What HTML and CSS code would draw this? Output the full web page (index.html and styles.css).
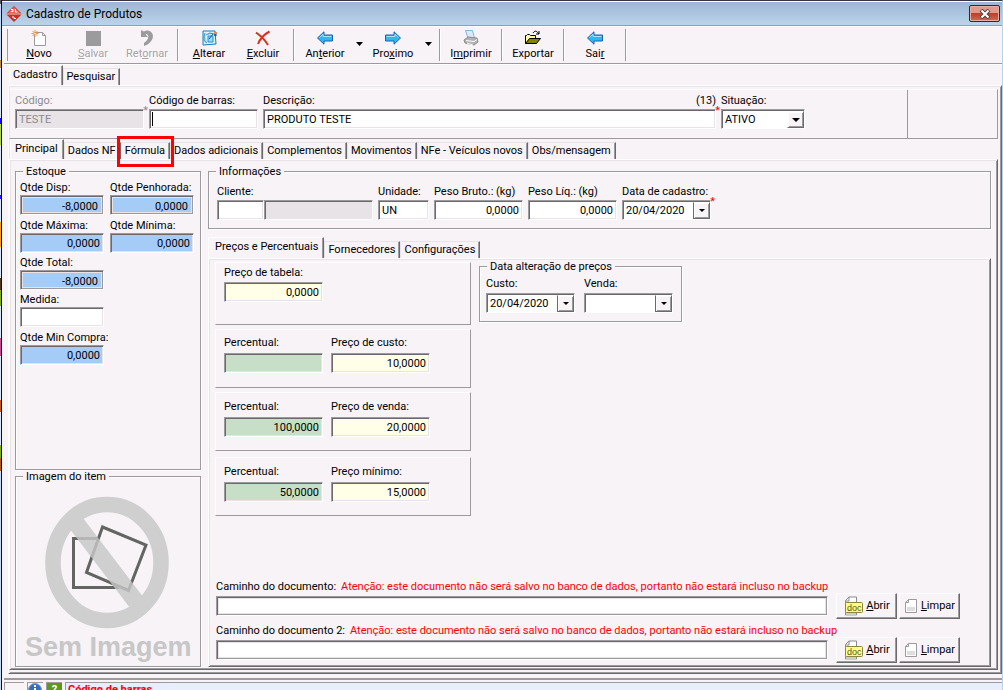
FILE: index.html
```html
<!DOCTYPE html>
<html lang="pt-BR">
<head>
<meta charset="utf-8">
<title>Cadastro de Produtos</title>
<link rel="stylesheet" href="styles.css">
</head>
<body>
<svg class="defs" aria-hidden="true">
  <symbol id="arrow-left" viewBox="0 0 16 14"><path d="M.5 7 7 .8v3.200h8.500v6H7v3.200z" fill="#35b4f0" stroke="#1b62b4"/><path d="M2.500 6.500 6 3.200V5.500h8.500" fill="none" stroke="#a5e4ff"/></symbol>
  <symbol id="doc" viewBox="0 0 20 21"><path d="M2.500 4.500 6 1h7.500v18h-11z" fill="#fff" stroke="#8c8a8c"/><path d="M6 1v4H2.500" fill="none" stroke="#8c8a8c"/><path d="M3 17h10v3H3z" fill="#cecbce"/><rect x="2.500" y="6.500" width="17" height="10" rx="1" fill="#ffff84" stroke="#8c8642"/><text x="4" y="15" class="doc-text">doc</text></symbol>
  <symbol id="page" viewBox="0 0 14 16"><path d="M1.500 4.500 4.500 1.500h8v13h-11z" fill="#fff" stroke="#9c9a9c"/><path d="M3 9h8v4H3z" fill="#e0dde0"/><path d="M4.500 1.500v3h-3" fill="none" stroke="#9c9a9c"/></symbol>
</svg>
<div class="desktop"></div>
<div class="window">
  <header class="titlebar">
    <svg class="logo" viewBox="0 0 16 16"><path d="M8 0 16 8 8 16 0 8z" fill="#c9302c"/><path d="M8 1 14 7H2z" fill="#e2685c"/><path d="M0 8h16" stroke="#f3c7c0"/><path d="M5 3.500h2v2H5M9.500 3v3h2M6 11h2v1.500h2" fill="none" stroke="#fff"/></svg>
    <h1>Cadastro de Produtos</h1>
    <button class="close" aria-label="Fechar"><svg viewBox="0 0 12 10"><path d="m2 1 8 8m0-8L2 9" stroke="#52434a" stroke-width="4"/><path d="m2.500 1.500 7 7m0-7-7 7" stroke="#fff" stroke-width="2"/></svg></button>
  </header>

  <nav class="toolbar">
    <button class="tool"><svg viewBox="0 0 16 16"><path d="M3.500 2.500h8l3 3v10h-11z" fill="#fff" stroke="#9c9a9c"/><path d="M11.500 2.500v3h3" fill="none" stroke="#9c9a9c"/><path d="M4 0v7M.5 3.500h7M1.500 1l5 5m0-5-5 5" stroke="#f0a020"/><path d="M3 3h2v1H3z" fill="#fff3a0"/></svg><span><u>N</u>ovo</span></button>
    <button class="tool" disabled><svg viewBox="0 0 16 16"><path d="M1 1h15v15H1z" fill="#9c9a9c"/></svg><span><u>S</u>alvar</span></button>
    <button class="tool" disabled><svg viewBox="0 0 16 16"><path d="M2 0v7h7L6.500 4.500C10 2.500 11 9 5 13v3c9-3 11-11 7-14-2-2-5-2-7-.5z" fill="#9c9a9c"/></svg><span>Ret<u>o</u>rnar</span></button>
    <i class="sep"></i>
    <button class="tool"><svg viewBox="0 0 16 16"><path d="M2 1h12l1 13-13 1z" fill="#dff3ff" stroke="#1c78b8"/><path d="M4 3C2 8 3 12 6 13M5 5l4-2 4 1M7 6h5v6H7z" fill="#9bdcfa" stroke="#2291d0"/><path d="m8 9 4-5" stroke="#174a80"/><path d="M14 3v3m-1-1h3" stroke="#174a80"/><path d="M13 2h3v2h-3z" fill="#d8904a"/></svg><span><u>A</u>lterar</span></button>
    <button class="tool"><svg viewBox="0 0 16 16"><path d="M1 2.500C6 6 10 10 13 15M14.500 1.500C8 5 5 9 3 14" fill="none" stroke="#d8321c" stroke-width="2"/></svg><span><u>E</u>xcluir</span></button>
    <i class="sep"></i>
    <button class="tool"><svg viewBox="0 0 16 14"><use href="#arrow-left"/></svg><span>An<u>t</u>erior</span></button>
    <button class="caret" aria-label="Opções de anterior"><svg viewBox="0 0 7 4"><path d="M0 0h7L3.500 4z"/></svg></button>
    <button class="tool"><svg class="flip" viewBox="0 0 16 14"><use href="#arrow-left"/></svg><span>Pro<u>x</u>imo</span></button>
    <button class="caret wide" aria-label="Opções de próximo"><svg viewBox="0 0 7 4"><path d="M0 0h7L3.500 4z"/></svg></button>
    <i class="sep"></i>
    <button class="tool"><svg viewBox="0 0 16 16"><path d="M2.500.5h7l2 7.500H5z" fill="#d6ebff" stroke="#84b4e0"/><path d="m1 10 4-3 9 1 1 4-4 3-9-2z" fill="#b5b2b5" stroke="#8c8a8c"/><path d="m3 10.500 8 1 3-2M4 13l6 2" fill="none" stroke="#fff"/></svg><span>I<u>m</u>primir</span></button>
    <i class="sep"></i>
    <button class="tool"><svg viewBox="0 0 16 16"><path d="M.5 13.500v-8h1l1-1h2l1 1h5v4" fill="#ffff9c" stroke="#000"/><path d="m.5 13.500 4-5h11l-4 5z" fill="#848200" stroke="#000"/><path d="M8 3c2-3 4-2 6 1m0-3v3h-3" fill="none" stroke="#000"/></svg><span>Exportar</span></button>
    <i class="sep"></i>
    <button class="tool"><svg viewBox="0 0 16 14"><use href="#arrow-left"/></svg><span>Sai<u>r</u></span></button>
    <i class="sep"></i>
  </nav>

  <nav class="tabs main-tabs">
    <button class="tab active">Cadastro</button>
    <button class="tab">Pesquisar</button>
  </nav>

  <main class="pane outer-pane">
    <section class="header-panel">
      <div class="header-fields">
        <div class="field w129 req muted"><label for="codigo">Código:</label><input id="codigo" value="TESTE" disabled></div>
        <div class="field w109"><label for="barras">Código de barras:</label><div class="caret-box"><input id="barras"></div></div>
        <div class="field grow req"><label for="desc">Descrição:<span>(13)</span></label><input id="desc" value="PRODUTO TESTE"></div>
        <div class="field w84"><label for="sit">Situação:</label><div class="combo"><select id="sit"><option>ATIVO</option></select><span class="drop"></span></div></div>
      </div>
    </section>

    <nav class="tabs">
      <button class="tab active">Principal</button>
      <button class="tab">Dados NF</button>
      <button class="tab marked">Fórmula</button>
      <button class="tab">Dados adicionais</button>
      <button class="tab">Complementos</button>
      <button class="tab">Movimentos</button>
      <button class="tab">NFe - Veículos novos</button>
      <button class="tab">Obs/mensagem</button>
    </nav>

    <div class="pane product-pane">
      <aside class="side">
        <section class="group stock">
          <h2>Estoque</h2>
          <div class="stock-grid">
            <div class="field"><label for="q1">Qtde Disp:</label><input id="q1" class="num blue framed" value="-8,0000"></div>
            <div class="field"><label for="q2">Qtde Penhorada:</label><input id="q2" class="num blue framed" value="0,0000"></div>
            <div class="field"><label for="q3">Qtde Máxima:</label><input id="q3" class="num blue" value="0,0000"></div>
            <div class="field"><label for="q4">Qtde Mínima:</label><input id="q4" class="num blue" value="0,0000"></div>
            <div class="field first"><label for="q5">Qtde Total:</label><input id="q5" class="num blue framed" value="-8,0000"></div>
            <div class="field first"><label for="q6">Medida:</label><input id="q6"></div>
            <div class="field first"><label for="q7">Qtde Min Compra:</label><input id="q7" class="num blue" value="0,0000"></div>
          </div>
        </section>
        <section class="group picture">
          <h2>Imagem do item</h2>
          <svg viewBox="16 484 184 182" role="img" aria-label="Sem Imagem">
            <path d="M73.500 538.500h44v49h-44z" fill="none" stroke="#636563" stroke-width="3"/>
            <path d="m102.500 527 43.500 18-17.500 45.500-42-18z" fill="#f7f3f7" stroke="#636563" stroke-width="3"/>
            <path d="m76 523 61 80" stroke="#c6c7c6" stroke-opacity=".82" stroke-width="17"/>
            <ellipse cx="107" cy="562.500" rx="54" ry="58" fill="none" stroke="#cecfce" stroke-width="15.500"/>
            <text x="25" y="656">Sem Imagem</text>
          </svg>
        </section>
      </aside>

      <div class="details">
        <section class="group info">
          <h2>Informações</h2>
          <div class="row">
            <div class="field w156"><label for="cli">Cliente:</label><div class="client"><input id="cli"><input aria-label="Nome do cliente" disabled></div></div>
            <div class="field w51"><label for="un">Unidade:</label><input id="un" value="UN"></div>
            <div class="field w89"><label for="pb">Peso Bruto.: (kg)</label><input id="pb" class="num" value="0,0000"></div>
            <div class="field w89"><label for="pl">Peso Líq.: (kg)</label><input id="pl" class="num" value="0,0000"></div>
            <div class="field w89 req"><label for="dc">Data de cadastro:</label><div class="combo"><input id="dc" value="20/04/2020"><button class="drop" aria-label="Abrir calendário"></button></div></div>
          </div>
        </section>

        <nav class="tabs price-tabs">
          <button class="tab active">Preços e Percentuais</button>
          <button class="tab">Fornecedores</button>
          <button class="tab">Configurações</button>
        </nav>
        <div class="pane price-pane">
          <div class="price-area">
            <div class="prices">
              <section class="raised first-price"><div class="field w99"><label for="pt">Preço de tabela:</label><input id="pt" class="num yellow" value="0,0000"></div></section>
              <section class="raised cost"><div class="field w99"><label for="p1">Percentual:</label><input id="p1" class="num green"></div><div class="field w99"><label for="v1">Preço de custo:</label><input id="v1" class="num yellow" value="10,0000"></div></section>
              <section class="raised"><div class="field w99"><label for="p2">Percentual:</label><input id="p2" class="num green" value="100,0000"></div><div class="field w99"><label for="v2">Preço de venda:</label><input id="v2" class="num yellow" value="20,0000"></div></section>
              <section class="raised last"><div class="field w99"><label for="p3">Percentual:</label><input id="p3" class="num green" value="50,0000"></div><div class="field w99"><label for="v3">Preço mínimo:</label><input id="v3" class="num yellow" value="15,0000"></div></section>
            </div>
            <section class="group dates">
              <h2>Data alteração de preços</h2>
              <div class="row">
                <div class="field w89"><label for="d1">Custo:</label><div class="combo"><input id="d1" value="20/04/2020"><button class="drop" aria-label="Abrir calendário"></button></div></div>
                <div class="field w89"><label for="d2">Venda:</label><div class="combo"><input id="d2"><button class="drop" aria-label="Abrir calendário"></button></div></div>
              </div>
            </section>
          </div>
          <div class="documents">
            <div class="document">
              <div class="field grow"><label for="doc1">Caminho do documento: <em>Atenção: este documento não será salvo no banco de dados, portanto não estará incluso no backup</em></label><input id="doc1" class="heavy"></div>
              <button class="push"><svg width="20" height="21"><use href="#doc"/></svg><span><u>A</u>brir</span></button>
              <button class="push"><svg width="14" height="16"><use href="#page"/></svg><span><u>L</u>impar</span></button>
            </div>
            <div class="document">
              <div class="field grow"><label for="doc2">Caminho do documento 2: <em>Atenção: este documento não será salvo no banco de dados, portanto não estará incluso no backup</em></label><input id="doc2" class="heavy"></div>
              <button class="push"><svg width="20" height="21"><use href="#doc"/></svg><span><u>A</u>brir</span></button>
              <button class="push"><svg width="14" height="16"><use href="#page"/></svg><span><u>L</u>impar</span></button>
            </div>
          </div>
        </div>
      </div>
    </div>
  </main>

  <footer class="status">
    <span class="cell"></span>
    <span class="cell small"><svg viewBox="0 0 14 14"><circle cx="7" cy="7" r="6.500" fill="#2f6fd0" stroke="#8c9ab0"/><path d="M6 2h2v2H6zM6 5h2v6H6z" fill="#fff"/></svg></span>
    <span class="cell small help">?</span>
    <span class="cell message">Código de barras</span>
  </footer>
</div>
</body>
</html>
```
FILE: styles.css
```css
* { box-sizing: border-box; }

:root {
  --face: #f7f3f7;
  --light: #ffffff;
  --soft: #e7e3e7;
  --shade: #9c9a9c;
  --dark: #6b696b;
}

body {
  margin: 0;
  height: 100vh;
  overflow: hidden;
  display: flex;
  background: var(--face);
  color: #000;
  font: 11px/14px Roboto, "Liberation Sans", sans-serif;
}

button, input, select { font: inherit; color: inherit; margin: 0; border-radius: 0; }
button { padding: 0; border: 0; background: none; white-space: nowrap; }
h1, h2 { margin: 0; font-weight: normal; font-size: inherit; }
.defs { position: absolute; width: 0; height: 0; }

.desktop {
  width: 2px;
  flex: none;
  border-right: 1px solid #101018;
  background: linear-gradient(#555 0 4px, #c6dbf7 4px 60px, #c08a40 60px 68px, #dbe7f7 68px 118px, #1010f0 118px 124px, #b0d850 124px 145px, #dbe7f7 145px 195px, #2020f0 195px 199px, #dbe7f7 199px 222px, #ff9c20 222px 247px, #dbe7f7 247px 278px, #503820 278px 290px, #80b020 290px 306px, #dbe7f7 306px 338px, #c05090 338px 356px, #dbe7f7 356px 400px, #c05a20 400px 412px, #dbe7f7 412px 445px, #80b020 445px 458px, #b05a20 458px 471px, #c6dbf7 471px);
}

.window {
  flex: 1;
  min-width: 0;
  height: calc(100vh + 10px);
  display: flex;
  flex-direction: column;
  padding-left: 2px;
  border-top: 1px solid #39343c;
  border-right: 1px solid #b5d3ef;
}

/* title bar */
.titlebar {
  height: 25px;
  flex: none;
  display: flex;
  align-items: center;
  gap: 4px;
  margin-left: -2px;
  padding: 0 2px 0 4px;
  border-top: 1px solid #fff;
  border-bottom: 1px solid #9c9a9c;
  background: linear-gradient(#9cb6d3, #bdd3eb);
}
.titlebar h1 { flex: 1; font: 12px/16px Roboto, sans-serif; }
.logo { width: 16px; height: 16px; }
.close {
  width: 31px;
  height: 17px;
  display: grid;
  place-items: center;
  border: 1px solid #4a1c24;
  border-radius: 2px;
  box-shadow: inset 0 0 0 1px #e8b0a4;
  background: linear-gradient(#e09a8c 0 45%, #b83c28 45%, #cf6a50);
}
.close svg { width: 12px; height: 10px; }

/* toolbar */
.toolbar {
  height: 38px;
  flex: none;
  display: flex;
  padding-left: 8px;
  border-top: 1px solid #fff;
  border-bottom: 1px solid var(--shade);
  background: linear-gradient(90deg, transparent 3px, var(--shade) 3px 4px, transparent 4px) 0 2px / 100% 32px no-repeat;
  box-shadow: 0 1px #fff;
}
.tool {
  width: 54px;
  display: flex;
  flex-direction: column;
  align-items: center;
  padding-top: 3px;
}
.tool svg { width: 16px; height: 16px; flex: none; }
.tool span { line-height: 16px; }
.tool:disabled { color: #a5a2a5; text-shadow: 1px 1px #fff; }
.flip { transform: scaleX(-1); }
.caret { width: 14px; display: grid; place-items: center; }
.caret.wide { width: 16px; }
.caret svg { width: 7px; height: 4px; margin-bottom: 2px; }
.sep {
  width: 8px;
  margin: 2px 0;
  background: linear-gradient(90deg, transparent 3px, var(--shade) 3px 4px, #fff 4px 5px, transparent 5px);
}

/* tabs and panes */
.tabs { display: flex; align-items: flex-end; flex: none; height: 20px; padding-left: 1px; }
.main-tabs { margin: 1px 0 0 5px; padding-left: 0; }
.tab {
  height: 17px;
  padding: 0 4px 0 3px;
  border-top: 1px solid var(--soft);
  border-left: 1px solid var(--soft);
  border-right: 1px solid var(--dark);
  box-shadow: inset -1px 0 var(--shade);
}
.tab.active {
  height: 21px;
  margin-bottom: -1px;
  padding: 0 5px 3px 4px;
  border-color: #fff var(--dark) transparent #fff;
  background: var(--face);
}
.main-tabs .tab.active { padding: 0 4px 3px 3px; }
.marked { position: relative; }
.marked::after {
  content: "";
  position: absolute;
  inset: -7px -5px -8px -5px;
  border: 3px solid #ff0008;
}
.pane {
  border: 1px solid;
  border-color: #fff var(--dark) var(--dark) #fff;
  box-shadow: inset 1px 1px var(--soft), inset -1px -1px var(--shade);
}
.outer-pane {
  flex: 1;
  min-height: 0;
  display: flex;
  flex-direction: column;
  margin-left: 4px;
  padding: 3px 3px 3px 0;
}

/* sunken boxes */
input, select {
  width: 100%;
  min-width: 0;
  height: 20px;
  padding: 0 4px 0 3px;
  outline: 0;
  border: 1px solid;
  border-color: var(--shade) #fff #fff var(--shade);
  box-shadow: inset 1px 1px var(--dark), inset -1px -1px var(--soft);
  background: #fff;
}
input:disabled { background: #e7e3e7; color: #8c8a8c; }
.num { text-align: right; padding-right: 3px; }
.blue { background: #a5cbf7; }
.green { background: #c6dfc6; }
.yellow { background: #ffffe7; }
.framed {
  padding: 2px 5px 0;
  box-shadow: inset 1px 1px var(--dark), inset -1px -1px var(--shade), inset 0 0 0 2px var(--soft);
}
.heavy { box-shadow: inset 1px 1px var(--dark), inset -1px -1px var(--shade), inset 0 0 0 2px var(--soft); }

.field { position: relative; display: flex; flex-direction: column; gap: 2px; flex: none; }
.field label { display: flex; justify-content: space-between; white-space: nowrap; }
.field.grow { flex: 1; min-width: 0; }
.muted label { color: #8c8a8c; }
.req::after { content: "*"; position: absolute; right: -4px; top: 10px; color: #f00; }
.muted.req::after { color: #8c8a8c; }
.w51 { width: 51px; }
.w84 { width: 84px; }
.w89 { width: 89px; }
.w99 { width: 99px; }
.w109 { width: 109px; }
.w129 { width: 129px; }
.w156 { width: 156px; }
.row { display: flex; gap: 5px; }

.combo {
  display: flex;
  height: 20px;
  border: 1px solid;
  border-color: var(--shade) #fff #fff var(--shade);
  box-shadow: inset 1px 1px var(--dark);
  padding: 1px 0 0 1px;
  background: #fff;
}
.combo input, .combo select { height: 17px; border: 0; box-shadow: none; padding: 0 2px; flex: 1; appearance: none; background: none; }
.drop {
  width: 17px;
  flex: none;
  display: grid;
  place-items: center;
  border: 1px solid;
  border-color: #fff var(--dark) var(--dark) var(--dark);
  box-shadow: inset 1px 1px #fff, inset -1px -1px var(--shade);
  background: var(--face);
}
.drop::before { content: ""; border: 3px solid transparent; border-top-color: #000; border-bottom: 0; }
.combo > span.drop { border-left-color: #fff; }
.combo > span.drop::before { border-width: 4px 4px 0; }
.caret-box { position: relative; display: flex; }
.caret-box::after { content: ""; position: absolute; left: 3px; top: 3px; width: 1px; height: 14px; background: #000; }

/* product header */
.header-panel {
  flex: none;
  height: 50px;
  padding-right: 89px;
  border: 1px solid;
  border-color: #fff var(--shade) var(--shade) var(--soft);
}
.header-fields {
  height: 100%;
  display: flex;
  gap: 5px;
  padding: 4px 102px 0 5px;
  border-right: 1px solid var(--shade);
}
.header-fields .field { gap: 1px; }

.product-pane { flex: 1; min-height: 0; display: flex; gap: 7px; padding: 11px 6px 2px 5px; }
.group { border: 1px solid var(--shade); box-shadow: 1px 1px #fff, inset 1px 1px #fff; position: relative; }
.group h2 { width: max-content; height: 14px; margin: -7px 0 0 7px; padding: 0 3px; background: var(--face); }
.side { width: 186px; flex: none; display: flex; flex-direction: column; gap: 6px; }
.stock { flex: 1; }
.stock-grid {
  display: grid;
  grid-template: 38px 37px 37px 38px 35px / 84px 84px;
  column-gap: 6px;
  padding: 2px 0 0 4px;
}
.stock-grid .field { gap: 0; }
.first { grid-column: 1; }
.picture svg { display: block; width: 100%; height: 182px; }
.picture text { font: bold 27px "Liberation Sans", sans-serif; fill: #c6c7c6; }

.details { flex: 1; min-width: 0; display: flex; flex-direction: column; }
.info { height: 58px; flex: none; }
.info .row { padding: 6px 8px; }
.info .field { gap: 1px; }
.client { display: grid; grid-template-columns: 47px 1fr; }
.price-tabs { margin-top: 8px; height: 21px; padding-left: 0; }
.price-tabs .tab.active { height: 22px; padding-left: 6px; }

.price-pane { flex: 1; min-height: 0; display: flex; flex-direction: column; justify-content: space-between; padding: 3px 30px 3px 6px; }
.price-area { display: flex; align-items: flex-start; gap: 8px; }
.prices { width: 256px; display: flex; flex-direction: column; gap: 4px; }
.raised {
  height: 59px;
  display: flex;
  gap: 8px;
  padding: 7px 8px;
  border: 1px solid;
  border-color: #fff var(--shade) var(--shade) #fff;
}
.raised .field { gap: 3px; }
.first-price { height: 63px; padding-top: 3px; }
.first-price .field { gap: 2px; }
.raised.cost { padding-top: 6px; }
.raised.last { margin-top: 2px; }
.dates { width: 203px; height: 56px; margin-top: 4px; }
.dates .row { gap: 9px; padding: 3px 6px; }
.documents { display: grid; grid-template-columns: minmax(0, 1fr); gap: 4px; }
.document { display: flex; gap: 2px; align-items: flex-end; height: 40px; }
.document .field { margin: 0 6px 3px 1px; }
.document label { justify-content: flex-start; gap: 5px; }
.document em { font-style: normal; color: #f00; }
.push {
  width: 61px;
  height: 26px;
  display: flex;
  align-items: center;
  justify-content: center;
  gap: 3px;
  border: 1px solid;
  border-color: #fff var(--dark) var(--dark) #fff;
  box-shadow: inset -1px -1px var(--shade);
}
.doc-text { font: 9px "Liberation Sans", sans-serif; fill: #5a5820; }

/* status bar */
.status { flex: none; height: 22px; display: flex; gap: 3px; margin-top: 4px; padding: 2px 0; border-top: 2px solid var(--shade); }
.cell { width: 20px; border-top: 1px solid var(--shade); border-left: 1px solid var(--shade); overflow: hidden; }
.cell.small { width: 16px; }
.cell svg { display: block; width: 14px; height: 14px; }
.cell.help { background: #5a9a18; color: #fff; font-weight: bold; text-align: center; }
.cell.message { flex: 1; padding-left: 2px; background: #e7efff; color: #f00; font-weight: bold; }
```
